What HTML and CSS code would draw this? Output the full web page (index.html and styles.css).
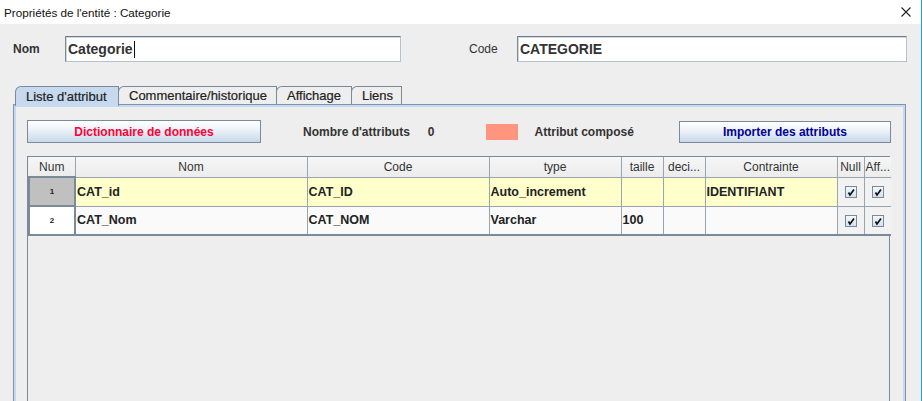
FILE: index.html
```html
<!DOCTYPE html>
<html lang="fr">
<head>
<meta charset="utf-8">
<title>Propriétés de l'entité</title>
<link rel="stylesheet" href="styles.css">
</head>
<body>
<div class="window">
  <div class="titlebar">
    <span class="title">Propriétés de l'entité : Categorie</span>
    <svg class="close" width="10" height="10" viewBox="0 0 10 10"><path d="M0.5 0.5 L9.5 9.5 M9.5 0.5 L0.5 9.5" stroke="#222" stroke-width="1.1" fill="none"/></svg>
  </div>
  <div class="content">
    <div class="fields">
      <label class="lbl lbl-nom">Nom</label>
      <div class="input input-nom">Categorie<span class="caret"></span></div>
      <label class="lbl lbl-code">Code</label>
      <div class="input input-code">CATEGORIE</div>
    </div>
    <div class="tabs">
      <div class="tab selected">Liste d'attribut</div>
      <div class="tab">Commentaire/historique</div>
      <div class="tab">Affichage</div>
      <div class="tab">Liens</div>
    </div>
    <div class="panel">
      <div class="toolbar">
        <button class="btn btn-dict">Dictionnaire de données</button>
        <span class="info info-count">Nombre d'attributs</span>
        <span class="info info-zero">0</span>
        <span class="swatch"></span>
        <span class="info info-comp">Attribut composé</span>
        <button class="btn btn-import">Importer des attributs</button>
      </div>
      <div class="pane">
        <table class="grid">
          <colgroup>
            <col class="c-num"><col class="c-nom"><col class="c-code"><col class="c-type"><col class="c-taille"><col class="c-deci"><col class="c-contr"><col class="c-null"><col class="c-aff">
          </colgroup>
          <thead>
            <tr><th>Num</th><th>Nom</th><th>Code</th><th>type</th><th>taille</th><th>deci...</th><th>Contrainte</th><th>Null</th><th>Aff...</th></tr>
          </thead>
          <tbody>
            <tr class="row-sel">
              <td class="num num-sel">1</td><td>CAT_id</td><td>CAT_ID</td><td>Auto_increment</td><td></td><td></td><td>IDENTIFIANT</td>
              <td class="chk"><span class="box"><svg width="10" height="10" viewBox="0 0 10 10"><path d="M2.5 5.5 L4 8 L8 2.5" stroke="#111" stroke-width="1.7" fill="none"/></svg></span></td>
              <td class="chk"><span class="box"><svg width="10" height="10" viewBox="0 0 10 10"><path d="M2.5 5.5 L4 8 L8 2.5" stroke="#111" stroke-width="1.7" fill="none"/></svg></span></td>
            </tr>
            <tr class="row-plain">
              <td class="num">2</td><td>CAT_Nom</td><td>CAT_NOM</td><td>Varchar</td><td>100</td><td></td><td></td>
              <td class="chk"><span class="box"><svg width="10" height="10" viewBox="0 0 10 10"><path d="M2.5 5.5 L4 8 L8 2.5" stroke="#111" stroke-width="1.7" fill="none"/></svg></span></td>
              <td class="chk"><span class="box"><svg width="10" height="10" viewBox="0 0 10 10"><path d="M2.5 5.5 L4 8 L8 2.5" stroke="#111" stroke-width="1.7" fill="none"/></svg></span></td>
            </tr>
          </tbody>
        </table>
      </div>
    </div>
  </div>
</div>
</body>
</html>
```

FILE: styles.css
```css
* { box-sizing: border-box; }
html, body { margin: 0; padding: 0; }
body {
  width: 922px;
  height: 401px;
  overflow: hidden;
  font-family: "Liberation Sans", Arial, sans-serif;
  color: #333;
  background: #eeeeee;
}
.window {
  width: 922px;
  height: 401px;
  border-right: 1px solid #1ba1e2;
  display: flex;
  flex-direction: column;
}
.titlebar {
  height: 24px;
  background: #ffffff;
  display: flex;
  align-items: center;
  padding: 0 0 0 4px;
  flex: none;
}
.title {
  font-size: 11.7px;
  color: #111;
}
.close {
  flex: none;
  margin-left: auto;
  margin-right: 10px;
}
.content {
  flex: 1;
  background: #eeeeee;
  display: flex;
  flex-direction: column;
  padding-left: 13px;
}
.fields {
  display: flex;
  align-items: center;
  height: 26px;
  margin-top: 12px;
}
.lbl { font-size: 12px; color: #333; }
.lbl-nom { font-weight: bold; width: 52px; }
.lbl-code { margin-left: 68px; width: 48px; }
.input {
  height: 26px;
  background: #ffffff;
  border: 1px solid #7a8a99;
  border-top-color: #6d7d8c;
  border-right-color: #b8c2cc;
  border-bottom-color: #b8c2cc;
  box-shadow: inset 1px 1px 0 #cfd6dd;
  font-weight: bold;
  font-size: 14px;
  color: #333;
  display: flex;
  align-items: center;
  padding-left: 2px;
}
.input-nom { width: 336px; }
.input-code { width: 390px; }
.caret {
  display: inline-block;
  width: 1px;
  height: 17px;
  background: #111;
  margin-left: 1px;
}
.tabs {
  display: flex;
  margin-top: 24px;
  padding-left: 2px;
  height: 18px;
  align-items: flex-end;
}
.tab {
  height: 18px;
  border: 1px solid #7a8a99;
  border-bottom: none;
  border-top-left-radius: 6px;
  background: #eeeeee;
  font-size: 13px;
  color: #222;
  padding: 0 10px;
  display: flex;
  align-items: center;
  margin-right: -1px;
  -webkit-text-stroke: 0.2px #222;
}
.tab.selected {
  background: #c6d9ef;
  width: 104px;
  position: relative;
  z-index: 1;
  height: 20px;
  margin-bottom: -2px;
}
.tab:nth-child(2) { width: 159px; }
.tab:nth-child(3) { width: 76px; }
.tab:nth-child(4) { width: 51px; }
.panel {
  width: 893px;
  flex: 1;
  border: 1px solid #7f94b0;
  border-bottom: none;
  background: #eeeeee;
  box-shadow: inset 2px 2px 0 #c6d9ef, inset -2px 0 0 #c6d9ef;
  padding: 15px 0 0 13px;
  display: flex;
  flex-direction: column;
}
.toolbar {
  display: flex;
  align-items: center;
  height: 23px;
}
.btn {
  height: 23px;
  border: 1px solid #7a8a99;
  background: linear-gradient(to bottom, #ffffff 0%, #eef3f9 40%, #c8d8ea 100%);
  font-family: "Liberation Sans", Arial, sans-serif;
  font-weight: bold;
  font-size: 12px;
  padding: 0;
  margin: 0;
}
.btn-dict { width: 234px; color: #ff0033; }
.btn-import { width: 212px; color: #000099; margin-left: 45px; height: 22px; }
.info { font-size: 12px; font-weight: bold; color: #333; }
.info-count { margin-left: 42px; }
.info-zero { margin-left: 18px; }
.swatch {
  width: 32px;
  height: 16px;
  background: #ff957e;
  margin-left: 51px;
}
.info-comp { margin-left: 17px; }
.pane {
  margin-top: 13px;
  width: 863px;
  flex: 1;
  border: 1px solid #7a8a99;
  border-bottom: none;
  background: #eeeeee;
}
.grid {
  border-collapse: collapse;
  table-layout: fixed;
  width: 862px;
}
.c-num { width: 46px; }
.c-nom { width: 232px; }
.c-code { width: 182px; }
.c-type { width: 132px; }
.c-taille { width: 42px; }
.c-deci { width: 42px; }
.c-contr { width: 132px; }
.c-null { width: 27px; }
.c-aff { width: 27px; }
.grid th {
  height: 20px;
  font-weight: normal;
  font-size: 12px;
  color: #333;
  background: linear-gradient(to bottom, #f6f6f6, #ececec);
  border-right: 1px solid #9aa4ae;
  border-bottom: 1px solid #9aa4ae;
  padding: 0;
  text-align: center;
  white-space: nowrap;
  overflow: hidden;
}
.grid th:last-child { border-right: none; }
.grid td {
  height: 29px;
  font-weight: bold;
  font-size: 12.5px;
  color: #222;
  border-right: 1px solid #9aa4ae;
  border-bottom: 1px solid #9aa4ae;
  padding: 0 0 0 1px;
  white-space: nowrap;
  overflow: hidden;
}
.row-sel td { background: #ffffcc; }
.row-plain td { background: #fafafa; }
.grid td.num {
  text-align: center;
  font-size: 8px;
  font-weight: bold;
  padding: 0;
  border: 2px solid #7a8a99;
  background: #ffffff;
}
.grid td.num-sel { background: #c0c0c0; }
.grid td.chk {
  background: #f2f2f2;
  text-align: center;
  padding: 0;
}
.grid td:last-child { border-right: none; }
.row-plain td { border-bottom: 2px solid #7a8a99; }
.box {
  display: inline-flex;
  align-items: center;
  justify-content: center;
  width: 12px;
  height: 12px;
  border: 1px solid #7a8a99;
  background: linear-gradient(to bottom, #f4f8fc, #d4e1f0);
  vertical-align: middle;
}
.box svg { display: block; }
```
